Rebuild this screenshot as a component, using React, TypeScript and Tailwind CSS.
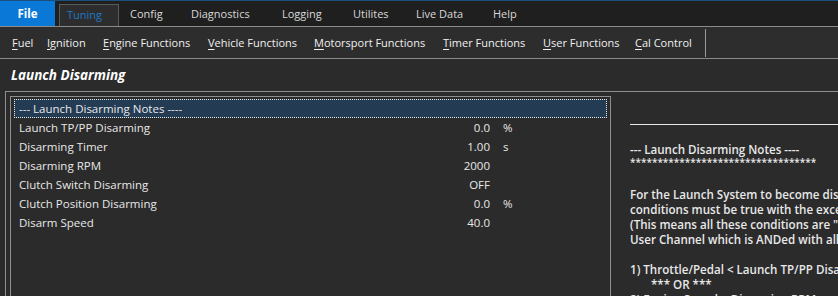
import React from "react";

const tabs: { label: string; w: string }[] = [
  { label: "Config", w: "w-[61px]" },
  { label: "Diagnostics", w: "w-[91px]" },
  { label: "Logging", w: "w-[71px]" },
  { label: "Utilites", w: "w-[63px]" },
  { label: "Live Data", w: "w-[77px]" },
  { label: "Help", w: "w-[50px]" },
];

const menus: { first: string; rest: string; w: string }[] = [
  { first: "F", rest: "uel", w: "w-[35px]" },
  { first: "I", rest: "gnition", w: "w-[56px]" },
  { first: "E", rest: "ngine Functions", w: "w-[105px]" },
  { first: "V", rest: "ehicle Functions", w: "w-[106px]" },
  { first: "M", rest: "otorsport Functions", w: "w-[129px]" },
  { first: "T", rest: "imer Functions", w: "w-[100px]" },
  { first: "U", rest: "ser Functions", w: "w-[92px]" },
  { first: "C", rest: "al Control", w: "w-[70px]" },
];

const rows: { label: string; value: string; unit: string }[] = [
  { label: "Launch TP/PP Disarming", value: "0.0", unit: "%" },
  { label: "Disarming Timer", value: "1.00", unit: "s" },
  { label: "Disarming RPM", value: "2000", unit: "" },
  { label: "Clutch Switch Disarming", value: "OFF", unit: "" },
  { label: "Clutch Position Disarming", value: "0.0", unit: "%" },
  { label: "Disarm Speed", value: "40.0", unit: "" },
];

export default function App() {
  return (
    <div
      className="w-[838px] h-[296px] overflow-hidden bg-[#2b2b2b] text-[#e8e8e8] flex flex-col"
      style={{ fontFamily: '"Open Sans", "Noto Sans", sans-serif' }}
    >
      {/* tab strip */}
      <div className="h-px bg-[#1d4f7c] shrink-0" />
      <div className="h-[25px] bg-[#1f1f1f] flex items-end shrink-0 text-[11px]">
        <div className="w-[55px] h-[25px] bg-[#0a78d7] flex items-center justify-center font-bold text-white text-[11.5px]">
          File
        </div>
        <div className="ml-[4px] w-[60px] h-[22px] bg-[#2d2d2d] border border-b-0 border-[#5a5a5a] flex items-center pl-[7px] text-[#1f78c8]">
          Tuning
        </div>
        <div className="w-[11px]" />
        {tabs.map((t) => (
          <div key={t.label} className={`${t.w} h-[24px] flex items-center text-[#d8d8d8]`}>
            {t.label}
          </div>
        ))}
      </div>
      <div className="h-px bg-[#8a8a8a] shrink-0" />
      {/* menu bar */}
      <div className="h-[31px] bg-[#2d2d2d] flex items-center shrink-0 text-[11px] pl-[12px]">
        {menus.map((m) => (
          <div key={m.first + m.rest} className={`${m.w} whitespace-nowrap text-[#f0f0f0] pt-[2px]`}>
            <span className="underline underline-offset-2">{m.first}</span>
            {m.rest}
          </div>
        ))}
        <div className="w-px h-[28px] bg-[#9a9a9a]" />
      </div>
      <div className="h-px bg-[#8a8a8a] shrink-0" />
      {/* header */}
      <div className="h-[32px] flex items-center pl-[11px] font-bold italic text-[13.5px] text-white shrink-0">
        Launch Disarming
      </div>
      {/* content */}
      <div className="flex-1 ml-[5px] border-l border-t border-[#8e8e8e] flex pt-[4px] pl-[4px]">
        <div className="w-[601px] border-l border-t border-r border-[#8e8e8e] pt-[2px] px-[3px] text-[11.5px] shrink-0">
          <div className="h-[19px] bg-[#243b54] border border-dotted border-[#e8e8e8] flex items-center pl-[4px] text-[#e8e8e8]">
            --- Launch Disarming Notes ----
          </div>
          {rows.map((r) => (
            <div key={r.label} className="h-[19px] flex items-center">
              <div className="w-[251px] pl-[5px] whitespace-nowrap">{r.label}</div>
              <div className="w-[225px] text-right">{r.value}</div>
              <div className="pl-[13px]">{r.unit}</div>
            </div>
          ))}
        </div>
        <div className="flex-1 pl-[19px] pt-[28px] text-[11.6px] font-semibold leading-[15px] whitespace-nowrap overflow-hidden">
          <div className="h-px bg-[#e8e8e8] mb-[17px]" />
          <div>--- Launch Disarming Notes ----</div>
          <div className="text-[10px] leading-[11px]">**********************************</div>
          <div className="h-[19px]" />
          <div>For the Launch System to become disarmed, all of the following</div>
          <div>conditions must be true with the exception of the OR condition</div>
          <div>(This means all these conditions are "OR"ed together, except the</div>
          <div>User Channel which is ANDed with all the others)</div>
          <div className="h-[15px]" />
          <div>1) Throttle/Pedal &lt; Launch TP/PP Disarming</div>
          <div className="pl-[21px]">*** OR ***</div>
          <div>2) Engine Speed &lt; Disarming RPM</div>
        </div>
      </div>
    </div>
  );
}
